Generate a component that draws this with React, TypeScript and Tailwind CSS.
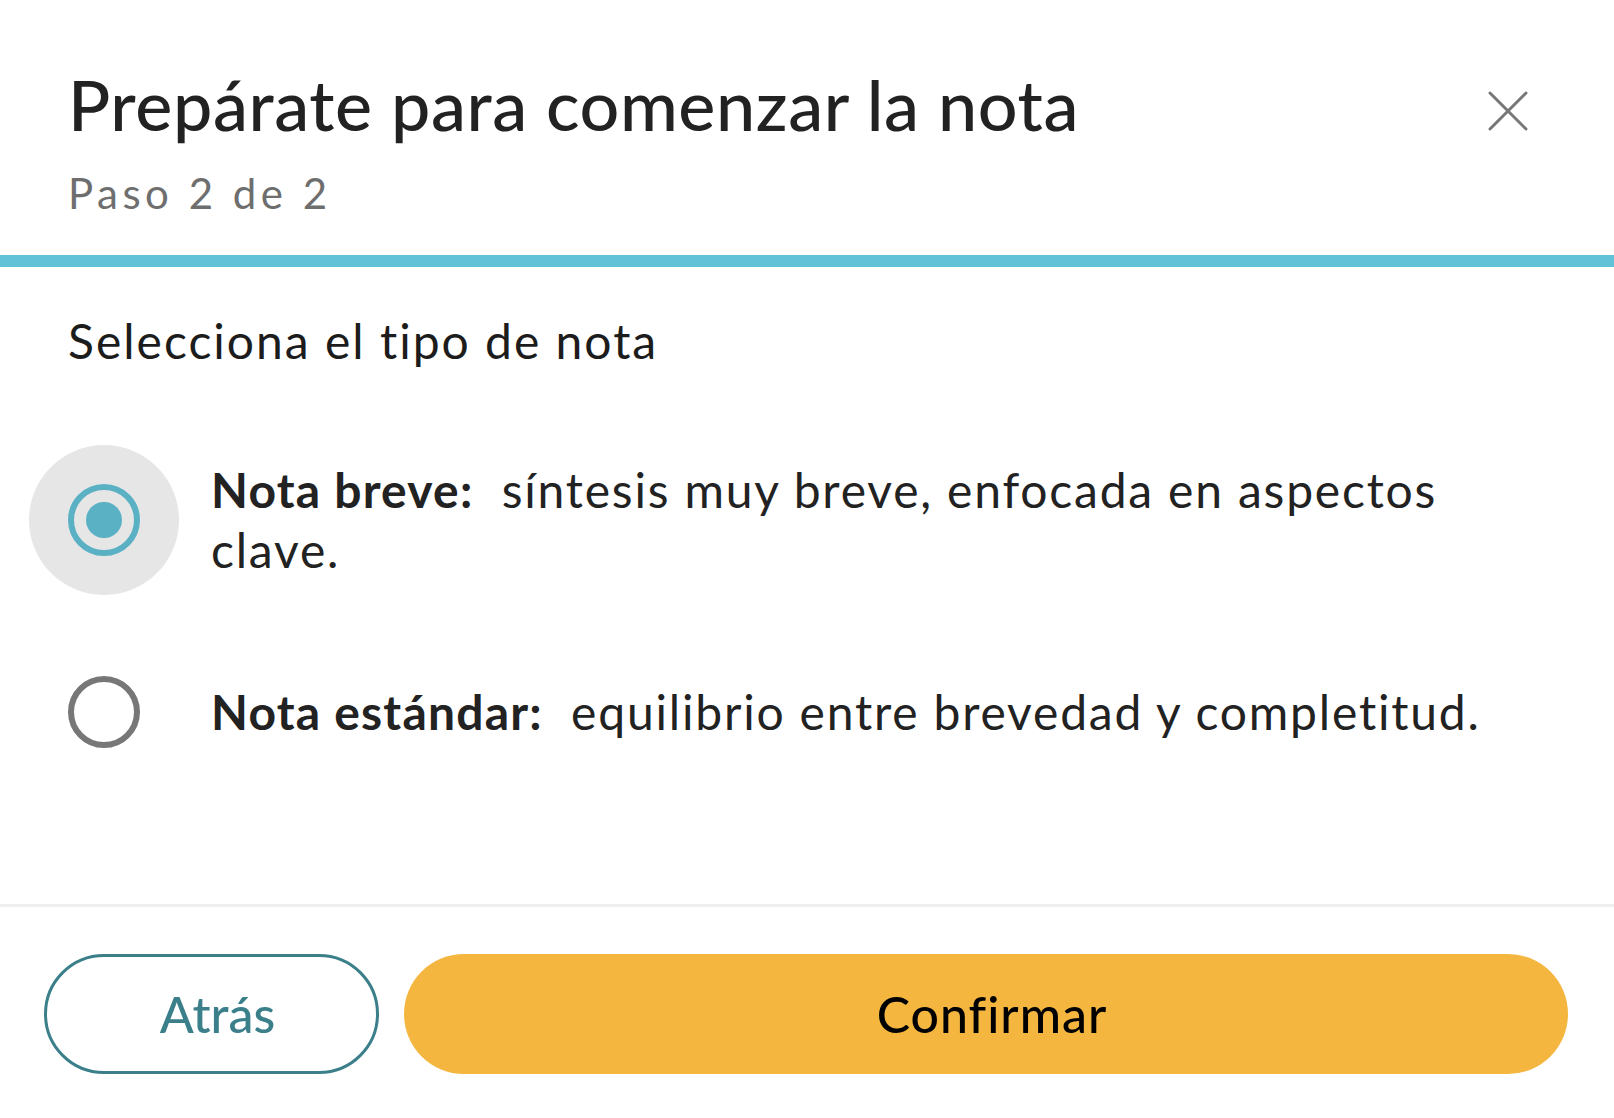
import React from "react";

function CloseIcon() {
  return (
    <svg width="40" height="40" viewBox="0 0 40 40" fill="none">
      <path d="M2 2 L38 38 M38 2 L2 38" stroke="#777777" strokeWidth="3" strokeLinecap="round" />
    </svg>
  );
}

function Radio({ checked }: { checked: boolean }) {
  return (
    <div
      className={`-ml-[39px] w-[150px] h-[150px] shrink-0 rounded-full flex items-center justify-center ${
        checked ? "bg-[#e6e6e6]" : "bg-transparent"
      }`}
    >
      {checked ? (
        <div className="w-[72px] h-[72px] rounded-full border-[6px] border-[#59b1c3] flex items-center justify-center">
          <div className="w-[36px] h-[36px] rounded-full bg-[#59b1c3]" />
        </div>
      ) : (
        <div className="w-[72px] h-[72px] rounded-full border-[6px] border-[#777777]" />
      )}
    </div>
  );
}

export default function App() {
  return (
    <div
      className="w-full h-[1118px] bg-white flex flex-col overflow-hidden"
      style={{ fontFamily: "Lato, 'Noto Sans', sans-serif" }}
    >
      <div className="flex items-start justify-between pl-[68px] pr-[86px] pt-[62px]">
        <div>
          <h1 className="text-[70px] leading-[84px] font-medium tracking-[0.6px] text-[#222222]">
            Prepárate para comenzar la nota
          </h1>
          <p className="mt-[22px] text-[42px] leading-[50px] tracking-[4.5px] text-[#6e6e6e]">Paso 2 de 2</p>
        </div>
        <button className="mt-[29px]">
          <CloseIcon />
        </button>
      </div>
      <div className="mt-[37px] h-[12px] w-full bg-[#62c3d8]" />
      <div className="flex-1 pl-[68px] pr-[80px]">
        <p className="mt-[45px] text-[48px] leading-[58px] tracking-[2px] text-[#1c1c1c]">
          Selecciona el tipo de nota
        </p>
        <div className="mt-[75px] flex flex-col gap-[42px]">
          <div className="flex items-center gap-[32px]">
            <Radio checked />
            <div className="text-[48px] leading-[60px] tracking-[1.8px] text-[#222222]">
              <div className="whitespace-nowrap">
                <span className="font-bold tracking-[1.2px]">Nota breve:</span>
                <span>{"\u00a0\u00a0síntesis muy breve, enfocada en aspectos"}</span>
              </div>
              <div>clave.</div>
            </div>
          </div>
          <div className="flex items-center gap-[32px]">
            <Radio checked={false} />
            <div className="text-[48px] leading-[60px] tracking-[1.8px] text-[#222222] whitespace-nowrap">
              <span className="font-bold tracking-[1.2px]">Nota estándar:</span>
              <span>{"\u00a0\u00a0equilibrio entre brevedad y completitud."}</span>
            </div>
          </div>
        </div>
      </div>
      <div className="h-[214px] shrink-0 border-t-[3px] border-[#efefef] pt-[47px] pl-[44px] pr-[46px] flex gap-[25px]">
        <button className="w-[335px] h-[120px] rounded-full border-[3px] border-[#3a7f8a] pl-[12px] text-[#3a7f8a] text-[50px] font-medium">
          Atrás
        </button>
        <button className="flex-1 h-[120px] rounded-full bg-[#f4b63f] pl-[12px] text-black text-[50px] font-medium tracking-[1px]">
          Confirmar
        </button>
      </div>
    </div>
  );
}
